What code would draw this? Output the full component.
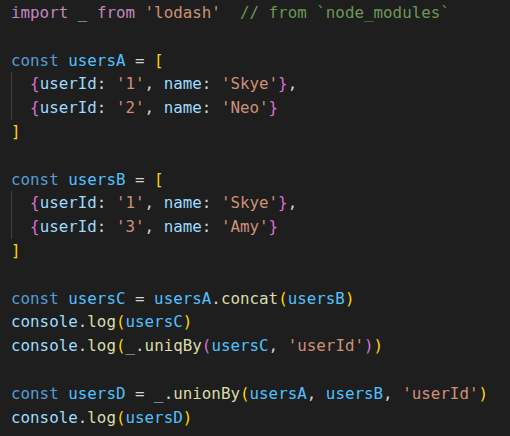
const c = {
  kw: 'text-[#569cd6]',
  imp: 'text-[#c586c0]',
  cst: 'text-[#4fc1ff]',
  vr: 'text-[#9cdcfe]',
  fn: 'text-[#dcdcaa]',
  str: 'text-[#ce9178]',
  cm: 'text-[#6a9955]',
  p: 'text-[#d4d4d4]',
  b1: 'text-[#ffd700]',
  b2: 'text-[#da70d6]',
};

type Tok = [string, string];

const lines: Tok[][] = [
  [[c.imp, 'import'], [c.p, ' '], [c.vr, '_'], [c.p, ' '], [c.imp, 'from'], [c.p, ' '], [c.str, "'lodash'"], [c.p, '  '], [c.cm, '// from `node_modules`']],
  [],
  [[c.kw, 'const'], [c.p, ' '], [c.cst, 'usersA'], [c.p, ' = '], [c.b1, '[']],
  [[c.p, '  '], [c.b2, '{'], [c.vr, 'userId'], [c.p, ': '], [c.str, "'1'"], [c.p, ', '], [c.vr, 'name'], [c.p, ': '], [c.str, "'Skye'"], [c.b2, '}'], [c.p, ',']],
  [[c.p, '  '], [c.b2, '{'], [c.vr, 'userId'], [c.p, ': '], [c.str, "'2'"], [c.p, ', '], [c.vr, 'name'], [c.p, ': '], [c.str, "'Neo'"], [c.b2, '}']],
  [[c.b1, ']']],
  [],
  [[c.kw, 'const'], [c.p, ' '], [c.cst, 'usersB'], [c.p, ' = '], [c.b1, '[']],
  [[c.p, '  '], [c.b2, '{'], [c.vr, 'userId'], [c.p, ': '], [c.str, "'1'"], [c.p, ', '], [c.vr, 'name'], [c.p, ': '], [c.str, "'Skye'"], [c.b2, '}'], [c.p, ',']],
  [[c.p, '  '], [c.b2, '{'], [c.vr, 'userId'], [c.p, ': '], [c.str, "'3'"], [c.p, ', '], [c.vr, 'name'], [c.p, ': '], [c.str, "'Amy'"], [c.b2, '}']],
  [[c.b1, ']']],
  [],
  [[c.kw, 'const'], [c.p, ' '], [c.cst, 'usersC'], [c.p, ' = '], [c.cst, 'usersA'], [c.p, '.'], [c.fn, 'concat'], [c.b1, '('], [c.cst, 'usersB'], [c.b1, ')']],
  [[c.vr, 'console'], [c.p, '.'], [c.fn, 'log'], [c.b1, '('], [c.cst, 'usersC'], [c.b1, ')']],
  [[c.vr, 'console'], [c.p, '.'], [c.fn, 'log'], [c.b1, '('], [c.vr, '_'], [c.p, '.'], [c.fn, 'uniqBy'], [c.b2, '('], [c.cst, 'usersC'], [c.p, ', '], [c.str, "'userId'"], [c.b2, ')'], [c.b1, ')']],
  [],
  [[c.kw, 'const'], [c.p, ' '], [c.cst, 'usersD'], [c.p, ' = '], [c.vr, '_'], [c.p, '.'], [c.fn, 'unionBy'], [c.b1, '('], [c.cst, 'usersA'], [c.p, ', '], [c.cst, 'usersB'], [c.p, ', '], [c.str, "'userId'"], [c.b1, ')']],
  [[c.vr, 'console'], [c.p, '.'], [c.fn, 'log'], [c.b1, '('], [c.cst, 'usersD'], [c.b1, ')']],
];

// rows that sit inside an array literal get the indent guide
const guided = new Set([3, 4, 8, 9]);

export default function App() {
  return (
    <div className="w-[510px] h-[436px] bg-[#1e1e1e] overflow-hidden pl-[11px] pt-[1px] font-['DejaVu_Sans_Mono',monospace] text-[15.85px] leading-[23.8px] whitespace-pre">
      {lines.map((toks, i) => (
        <div key={i} className="relative h-[23.8px]">
          {guided.has(i) && <div className="absolute left-0 top-0 bottom-0 w-px bg-[#404040]" />}
          {toks.map(([cls, t], j) => (
            <span key={j} className={cls}>{t}</span>
          ))}
        </div>
      ))}
    </div>
  );
}
